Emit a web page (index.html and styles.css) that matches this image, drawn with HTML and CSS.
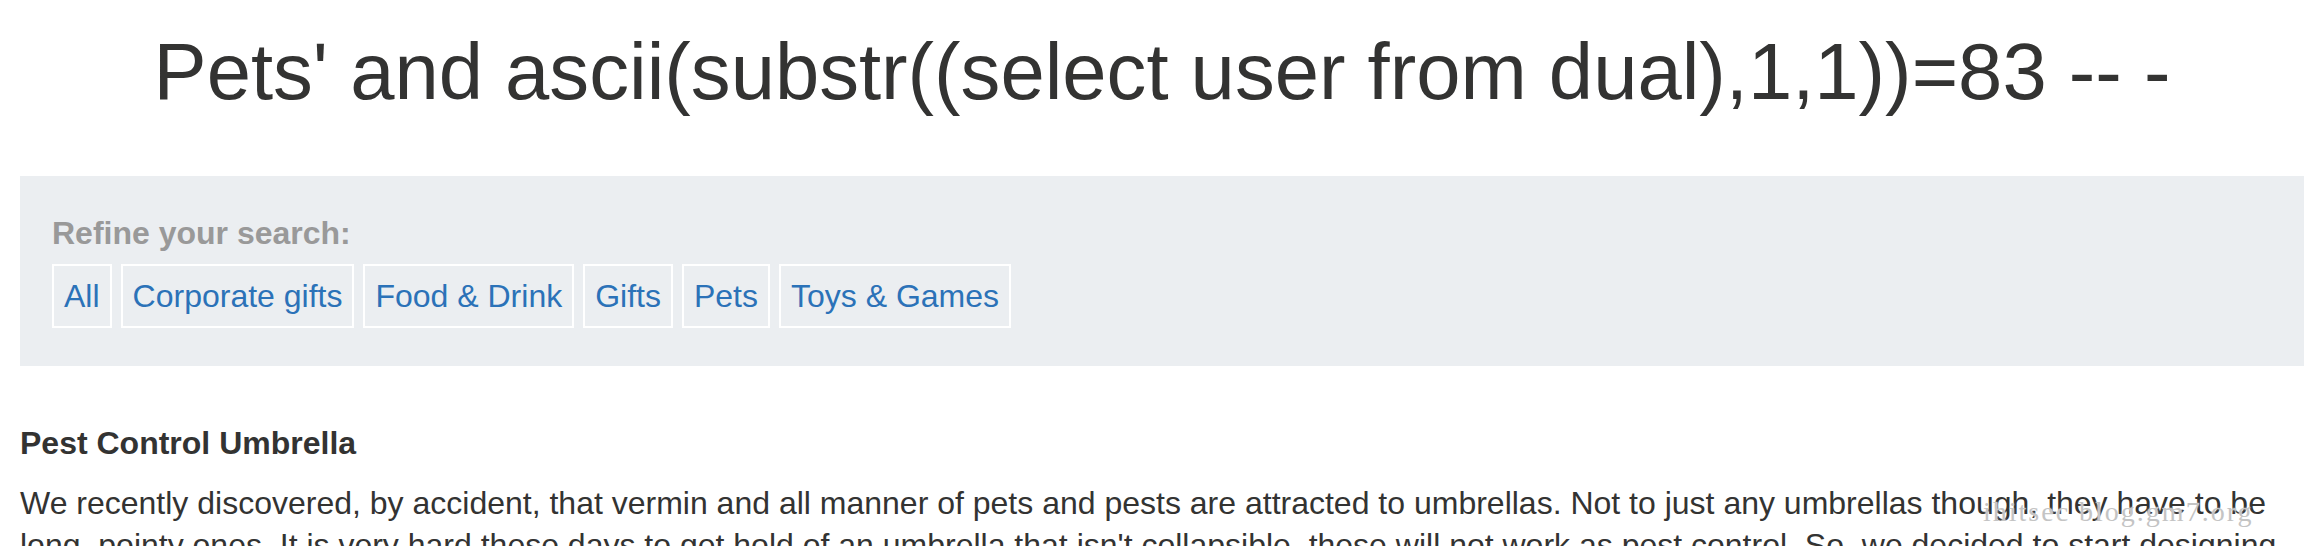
FILE: index.html
```html
<!DOCTYPE html>
<html lang="en">
<head>
<meta charset="utf-8">
<title>Pets' and ascii(substr((select user from dual),1,1))=83 -- -</title>
<link rel="stylesheet" href="styles.css">
</head>
<body>
<div class="page">
  <h1 class="page-title">Pets' and ascii(substr((select user from dual),1,1))=83 -- -</h1>
  <section class="filter">
    <div class="filter-label">Refine your search:</div>
    <div class="filter-links">
      <a class="filter-link" href="#">All</a>
      <a class="filter-link" href="#">Corporate gifts</a>
      <a class="filter-link" href="#">Food &amp; Drink</a>
      <a class="filter-link" href="#">Gifts</a>
      <a class="filter-link" href="#">Pets</a>
      <a class="filter-link" href="#">Toys &amp; Games</a>
    </div>
  </section>
  <section class="product">
    <h3 class="product-title">Pest Control Umbrella</h3>
    <p class="product-desc">We recently discovered, by accident, that vermin and all manner of pets and pests are attracted to umbrellas. Not to just any umbrellas though, they have to be long, pointy ones. It is very hard these days to get hold of an umbrella that isn't collapsible, these will not work as pest control. So, we decided to start designing our own umbrellas.</p>
  </section>
</div>
<div class="watermark">ihitsec blog.gm7.org</div>
</body>
</html>
```
FILE: styles.css
```css
html, body {
  margin: 0;
  padding: 0;
  background: #ffffff;
}
body {
  font-family: "Liberation Sans", Arial, sans-serif;
  color: #333332;
  overflow: hidden;
  position: relative;
}
.page {
  padding-left: 20px;
}
.page-title {
  margin: 0 0 55px 0;
  padding-top: 26px;
  padding-bottom: 3px;
  font-size: 79.6px;
  line-height: 92px;
  font-weight: normal;
  text-align: center;
  white-space: nowrap;
}
.filter {
  background: #ebeef1;
  padding: 37px 32px 38px 32px;
}
.filter-label {
  font-size: 32px;
  line-height: 40px;
  font-weight: bold;
  color: #999999;
  margin-bottom: 11px;
}
.filter-links {
  display: flex;
  gap: 9px;
}
.filter-link {
  display: block;
  font-size: 32px;
  line-height: 40px;
  padding: 10px;
  border: 2px solid #ffffff;
  color: #2b72b8;
  text-decoration: none;
}
.product {
  padding-right: 20px;
}
.product-title {
  margin: 57px 0 0 0;
  font-size: 32px;
  line-height: 40px;
  font-weight: bold;
}
.product-desc {
  margin: 19px 0 0 0;
  font-size: 32px;
  line-height: 42px;
}
.watermark {
  position: absolute;
  left: 1983px;
  top: 496px;
  font-family: "Liberation Serif", "Times New Roman", serif;
  font-size: 28px;
  line-height: 32px;
  letter-spacing: 2px;
  color: #c4c4c4;
  text-shadow: 0 0 2px #ffffff;
}
```
